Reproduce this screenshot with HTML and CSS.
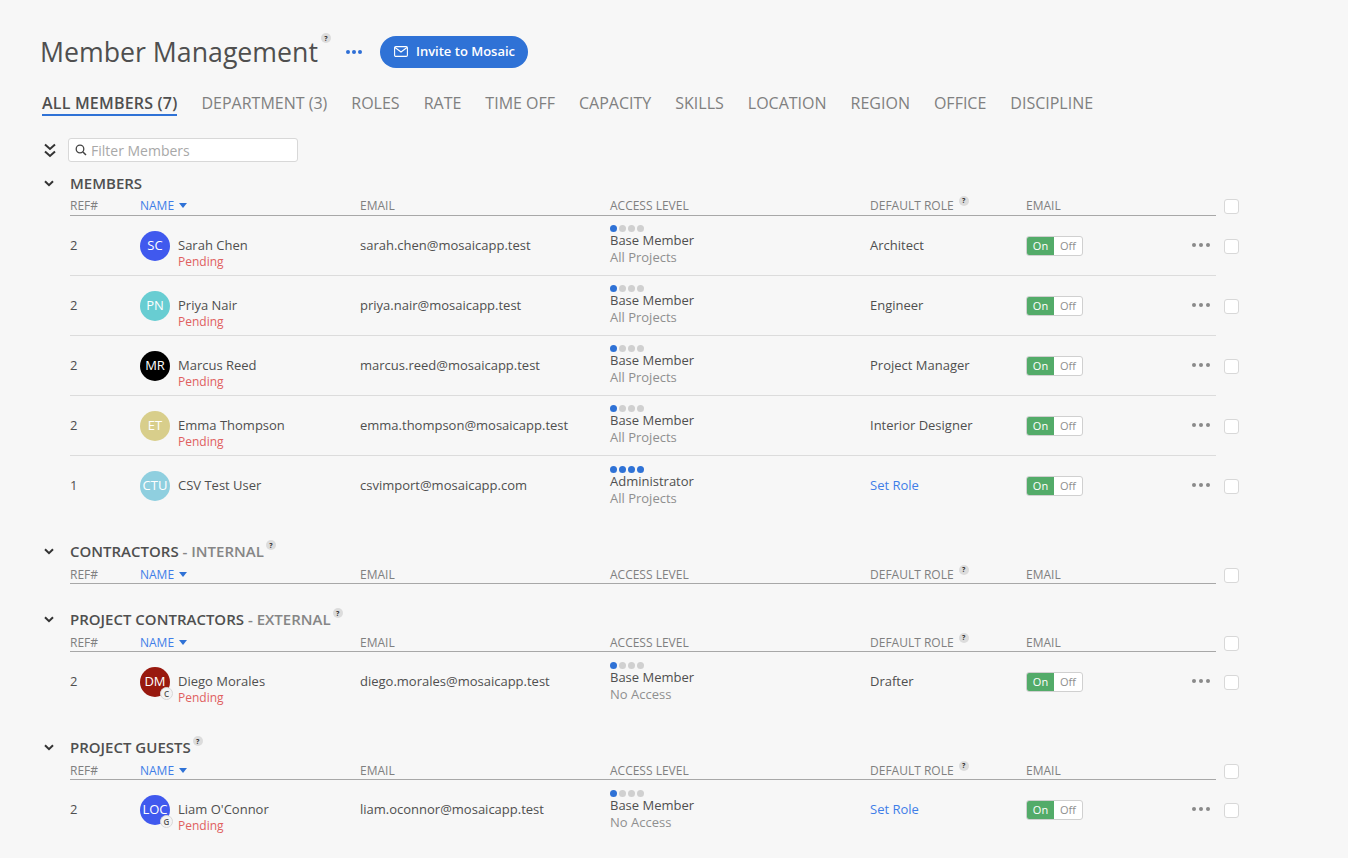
FILE: index.html
```html
<!DOCTYPE html>
<html lang="en">
<head>
<meta charset="utf-8">
<title>Member Management</title>
<link rel="stylesheet" href="styles.css">
</head>
<body>
<svg class="defs" width="0" height="0" aria-hidden="true">
  <symbol id="chev" viewBox="0 0 10 7"><path d="M1 1.2 5 5.2 9 1.2" fill="none" stroke="currentColor" stroke-width="2"/></symbol>
</svg>
<main class="page">
  <header class="title-row">
    <h1 class="title">Member Management</h1>
    <span class="help help-title">?</span>
    <span class="more-blue"><i></i><i></i><i></i></span>
    <button class="invite">
      <svg class="mail" viewBox="0 0 14 11" width="14" height="11"><rect x=".6" y=".6" width="12.8" height="9.8" rx="1.2" fill="none" stroke="#fff" stroke-width="1.1"/><path d="M1 1.5 7 6l6-4.500" fill="none" stroke="#fff" stroke-width="1.1"/></svg>
      <span class="invite-label">Invite to Mosaic</span>
    </button>
  </header>
  <nav class="tabs">
    <span class="tab active">ALL MEMBERS (7)</span>
    <span class="tab">DEPARTMENT (3)</span>
    <span class="tab">ROLES</span>
    <span class="tab">RATE</span>
    <span class="tab">TIME OFF</span>
    <span class="tab">CAPACITY</span>
    <span class="tab">SKILLS</span>
    <span class="tab">LOCATION</span>
    <span class="tab">REGION</span>
    <span class="tab">OFFICE</span>
    <span class="tab">DISCIPLINE</span>
  </nav>
  <div class="filter-row">
    <svg class="collapse-all" viewBox="0 0 12 15" width="12" height="15"><path d="M1 1.500 6 6l5-4.500M1 8.500 6 13l5-4.500" fill="none" stroke="#333" stroke-width="2"/></svg>
    <div class="filter">
      <svg viewBox="0 0 12 12" width="12" height="12"><circle cx="5" cy="5" r="3.800" fill="none" stroke="#444" stroke-width="1.300"/><path d="M8 8l3 3" stroke="#444" stroke-width="1.500"/></svg>
      <span>Filter Members</span>
    </div>
  </div>

  <section class="group">
    <h2 class="group-title"><svg class="chev"><use href="#chev"/></svg>MEMBERS</h2>
    <div class="grid head"><span>REF#</span><span class="sort">NAME<i class="caret"></i></span><span>EMAIL</span><span>ACCESS LEVEL</span><span class="role-h">DEFAULT ROLE<b class="help">?</b></span><span>EMAIL</span><span></span><span class="box"></span></div>

    <div class="grid row"><span>2</span><div class="who"><span class="avatar blue">SC</span><div class="stack"><div class="name">Sarah Chen</div><div class="pending">Pending</div></div></div><span>sarah.chen@mosaicapp.test</span><div class="access"><div class="dots"><i class="on"></i><i></i><i></i><i></i></div><div>Base Member</div><div class="scope">All Projects</div></div><span>Architect</span><div class="toggle"><span class="t-on">On</span><span class="t-off">Off</span></div><span class="more"><i></i><i></i><i></i></span><span class="box"></span></div>

    <div class="grid row"><span>2</span><div class="who"><span class="avatar teal">PN</span><div class="stack"><div class="name">Priya Nair</div><div class="pending">Pending</div></div></div><span>priya.nair@mosaicapp.test</span><div class="access"><div class="dots"><i class="on"></i><i></i><i></i><i></i></div><div>Base Member</div><div class="scope">All Projects</div></div><span>Engineer</span><div class="toggle"><span class="t-on">On</span><span class="t-off">Off</span></div><span class="more"><i></i><i></i><i></i></span><span class="box"></span></div>

    <div class="grid row"><span>2</span><div class="who"><span class="avatar black">MR</span><div class="stack"><div class="name">Marcus Reed</div><div class="pending">Pending</div></div></div><span>marcus.reed@mosaicapp.test</span><div class="access"><div class="dots"><i class="on"></i><i></i><i></i><i></i></div><div>Base Member</div><div class="scope">All Projects</div></div><span>Project Manager</span><div class="toggle"><span class="t-on">On</span><span class="t-off">Off</span></div><span class="more"><i></i><i></i><i></i></span><span class="box"></span></div>

    <div class="grid row"><span>2</span><div class="who"><span class="avatar sand">ET</span><div class="stack"><div class="name">Emma Thompson</div><div class="pending">Pending</div></div></div><span>emma.thompson@mosaicapp.test</span><div class="access"><div class="dots"><i class="on"></i><i></i><i></i><i></i></div><div>Base Member</div><div class="scope">All Projects</div></div><span>Interior Designer</span><div class="toggle"><span class="t-on">On</span><span class="t-off">Off</span></div><span class="more"><i></i><i></i><i></i></span><span class="box"></span></div>

    <div class="grid row last"><span>1</span><div class="who"><span class="avatar sky">CTU</span><div class="solo"><div class="name">CSV Test User</div></div></div><span>csvimport@mosaicapp.com</span><div class="access"><div class="dots"><i class="on"></i><i class="on"></i><i class="on"></i><i class="on"></i></div><div>Administrator</div><div class="scope">All Projects</div></div><span class="link">Set Role</span><div class="toggle"><span class="t-on">On</span><span class="t-off">Off</span></div><span class="more"><i></i><i></i><i></i></span><span class="box"></span></div>
  </section>

  <section class="group">
    <h2 class="group-title"><svg class="chev"><use href="#chev"/></svg>CONTRACTORS<em>&nbsp;- INTERNAL</em><b class="help">?</b></h2>
    <div class="grid head"><span>REF#</span><span class="sort">NAME<i class="caret"></i></span><span>EMAIL</span><span>ACCESS LEVEL</span><span class="role-h">DEFAULT ROLE<b class="help">?</b></span><span>EMAIL</span><span></span><span class="box"></span></div>
  </section>

  <section class="group">
    <h2 class="group-title"><svg class="chev"><use href="#chev"/></svg>PROJECT CONTRACTORS<em>&nbsp;- EXTERNAL</em><b class="help">?</b></h2>
    <div class="grid head"><span>REF#</span><span class="sort">NAME<i class="caret"></i></span><span>EMAIL</span><span>ACCESS LEVEL</span><span class="role-h">DEFAULT ROLE<b class="help">?</b></span><span>EMAIL</span><span></span><span class="box"></span></div>
    <div class="grid row last"><span>2</span><div class="who"><span class="avatar maroon">DM<b class="tag">C</b></span><div class="stack"><div class="name">Diego Morales</div><div class="pending">Pending</div></div></div><span>diego.morales@mosaicapp.test</span><div class="access"><div class="dots"><i class="on"></i><i></i><i></i><i></i></div><div>Base Member</div><div class="scope">No Access</div></div><span>Drafter</span><div class="toggle"><span class="t-on">On</span><span class="t-off">Off</span></div><span class="more"><i></i><i></i><i></i></span><span class="box"></span></div>
  </section>

  <section class="group">
    <h2 class="group-title"><svg class="chev"><use href="#chev"/></svg>PROJECT GUESTS<b class="help">?</b></h2>
    <div class="grid head"><span>REF#</span><span class="sort">NAME<i class="caret"></i></span><span>EMAIL</span><span>ACCESS LEVEL</span><span class="role-h">DEFAULT ROLE<b class="help">?</b></span><span>EMAIL</span><span></span><span class="box"></span></div>
    <div class="grid row last"><span>2</span><div class="who"><span class="avatar blue">LOC<b class="tag">G</b></span><div class="stack"><div class="name">Liam O'Connor</div><div class="pending">Pending</div></div></div><span>liam.oconnor@mosaicapp.test</span><div class="access"><div class="dots"><i class="on"></i><i></i><i></i><i></i></div><div>Base Member</div><div class="scope">No Access</div></div><span class="link">Set Role</span><div class="toggle"><span class="t-on">On</span><span class="t-off">Off</span></div><span class="more"><i></i><i></i><i></i></span><span class="box"></span></div>
  </section>
</main>
</body>
</html>
```
FILE: styles.css
```css
* { box-sizing: border-box; }
html, body { margin: 0; height: 100%; overflow: hidden; }
body { background: #f7f7f7; color: #4f4f4f; font-family: "Open Sans", sans-serif; font-size: 13px; }
.defs { position: absolute; }
.page { padding: 35px 0 0 40px; width: 1348px; height: 858px; overflow: hidden; }

.title-row { display: flex; align-items: center; height: 33px; }
.title { margin: 0; font-size: 26.7px; font-weight: 400; line-height: 33px; color: #4f4f4f; }
.help { display: inline-flex; align-items: center; justify-content: center; width: 10px; height: 10px; border-radius: 50%; background: #dcdcdc; color: #333; font-size: 7px; font-weight: 700; font-style: normal; line-height: 1; }
.help-title { align-self: flex-start; margin: -2px 0 0 3px; }
.more-blue { display: flex; gap: 2px; margin-left: 15px; }
.more-blue i { width: 4px; height: 4px; border-radius: 50%; background: #2f6fd6; }
.invite { display: flex; align-items: center; gap: 8px; margin-left: 18px; width: 148px; height: 32px; padding: 0 0 0 14px; border: 0; border-radius: 16px; background: #2f72d6; color: #fff; font: 600 13px "Open Sans", sans-serif; }
.invite-label { padding-bottom: 2px; }

.tabs { display: flex; gap: 24px; margin: 25px 0 0 2px; height: 24px; }
.tab { font-size: 16px; line-height: 20px; color: #808080; height: 24px; white-space: nowrap; }
.tab.active { color: #4f4f4f; font-weight: 600; letter-spacing: .2px; border-bottom: 2px solid #2f72d6; height: 23px; }

.filter-row { display: flex; align-items: center; gap: 12px; margin: 21px 0 0 4px; height: 24px; }
.filter { display: flex; align-items: center; gap: 4px; width: 230px; height: 24px; padding-left: 6px; background: #fff; border: 1px solid #d8d8d8; border-radius: 3px; color: #a8a8a8; font-size: 14px; }

.group { margin-top: 25px; }
.filter-row + .group { margin-top: 11px; }
.group-title { display: flex; align-items: center; height: 20px; margin: 0 0 0 4px; font-size: 15px; font-weight: 600; color: #4f4f4f; }
.chev { width: 10px; height: 7px; margin-right: 16px; color: #333; }
.group-title em { font-style: normal; font-weight: 600; color: #868686; }
.group-title .help { align-self: flex-start; margin: -1px 0 0 2px; }

.grid { display: grid; grid-template-columns: 70px 220px 250px 260px 156px 130px 68px 24px; align-items: center; margin-left: 30px; width: 1178px; position: relative; }
.head { height: 23px; padding-top: 2px; font-size: 12px; color: #808080; font-weight: 400; grid-template-rows: 20px; }
.group + .group .head { padding-top: 3px; }
.head::after { content: ""; position: absolute; left: 0; top: 22px; width: 1146px; height: 1px; background: #a8a8a8; }
.sort { color: #3f7ee8; display: flex; align-items: center; }
.caret { width: 0; height: 0; margin-left: 5px; border: 4px solid transparent; border-top: 5px solid #2f72d6; border-bottom: 0; }
.role-h { display: flex; }
.role-h .help { margin: 0 0 0 5px; transform: translateY(-1px); }
.box { width: 15px; height: 15px; background: #fff; border: 1px solid #d8d8d8; border-radius: 3px; justify-self: start; }
.head .box { transform: translateY(1px); }

.row { height: 60px; }
.row > span { padding-bottom: 2px; }
.row::after { content: ""; position: absolute; left: 0; bottom: 0; width: 1146px; height: 1px; background: #dcdcdc; }
.row.last::after { display: none; }
.who { display: flex; align-items: center; gap: 8px; }
.avatar { position: relative; flex: none; display: flex; align-items: center; justify-content: center; width: 30px; height: 30px; padding-bottom: 2px; border-radius: 50%; color: #fff; font-size: 13px; line-height: 12px; }
.blue { background: #4059ee; }
.teal { background: #68cdd2; }
.black { background: #000; }
.sand { background: #d8ce8b; }
.sky { background: #8fcfdf; }
.maroon { background: #98190f; }
.tag { position: absolute; right: -3px; bottom: -3px; width: 13px; height: 13px; display: flex; align-items: center; justify-content: center; border-radius: 50%; background: #f3f3f3; border: 1px solid #d8d8d8; color: #555; font-size: 8px; font-weight: 600; }
.stack { padding-top: 15px; }
.solo { padding-bottom: 2px; }
.name { line-height: 16px; }
.pending { color: #e0605f; font-size: 12px; line-height: 16px; margin-top: 1px; }
.access { line-height: 17px; }
.row:not(.last) .access { margin-bottom: 1px; }
.dots { display: flex; gap: 2px; height: 7px; }
.dots i { width: 7px; height: 7px; border-radius: 50%; background: #d0d0d0; }
.dots i.on { background: #2f72d6; }
.scope { color: #8f8f8f; }
.link { color: #3f7ee8; }
.toggle { display: flex; width: 57px; height: 20px; background: #fff; border: 1px solid #d0d0d0; border-radius: 3px; font-size: 11px; line-height: 18px; overflow: hidden; }
.t-on { width: 27px; background: #53ab69; color: #fff; text-align: center; }
.t-off { flex: 1; color: #8f8f8f; text-align: center; }
.more { display: flex; gap: 3px; margin-left: 36px; }
.more i { width: 4px; height: 4px; border-radius: 50%; background: #8a8a8a; }
```
